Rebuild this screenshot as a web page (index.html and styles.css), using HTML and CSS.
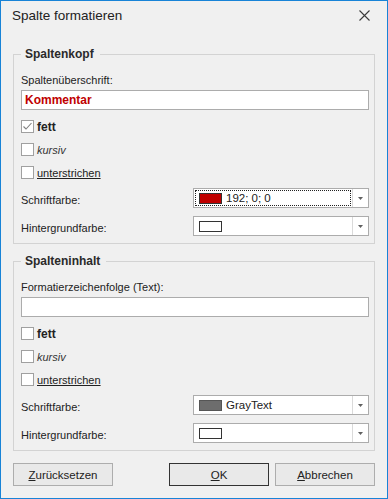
FILE: index.html
```html
<!DOCTYPE html>
<html lang="de">
<head>
<meta charset="utf-8">
<title>Spalte formatieren</title>
<link rel="stylesheet" href="styles.css">
</head>
<body>
<div class="window">
  <div class="titlebar">
    <span class="title">Spalte formatieren</span>
    <svg class="close" width="11" height="11" viewBox="0 0 11 11"><path d="M0.5 0.5 L10.5 10.5 M10.5 0.5 L0.5 10.5" stroke="#3a3a3a" stroke-width="1.1" fill="none"/></svg>
  </div>
  <div class="main">
    <fieldset class="group">
      <legend>Spaltenkopf</legend>
      <div class="field-label">Spaltenüberschrift:</div>
      <div class="textbox"><span class="head-text">Kommentar</span></div>
      <div class="checks">
        <div class="check"><span class="box"><svg width="11" height="11" viewBox="0 0 11 11"><polyline points="1.5,5.5 4,8 9.5,2" stroke="#808080" stroke-width="1.1" fill="none"/></svg></span><span class="bold">fett</span></div>
        <div class="check"><span class="box"></span><span class="italic">kursiv</span></div>
        <div class="check"><span class="box"></span><span class="under">unterstrichen</span></div>
      </div>
      <div class="colors">
        <span class="clabel">Schriftfarbe:</span>
        <div class="combo"><div class="combo-val focus"><span class="swatch red"></span><span class="cval">192; 0; 0</span></div><span class="combo-btn"><svg width="5" height="3" viewBox="0 0 5 3"><path d="M0 0 H5 L2.5 3 Z" fill="#606060"/></svg></span></div>
        <span class="clabel">Hintergrundfarbe:</span>
        <div class="combo"><div class="combo-val"><span class="swatch white"></span></div><span class="combo-btn"><svg width="5" height="3" viewBox="0 0 5 3"><path d="M0 0 H5 L2.5 3 Z" fill="#606060"/></svg></span></div>
      </div>
    </fieldset>
    <fieldset class="group second">
      <legend>Spalteninhalt</legend>
      <div class="field-label">Formatierzeichenfolge (Text):</div>
      <div class="textbox"></div>
      <div class="checks">
        <div class="check"><span class="box"></span><span class="bold">fett</span></div>
        <div class="check"><span class="box"></span><span class="italic">kursiv</span></div>
        <div class="check"><span class="box"></span><span class="under">unterstrichen</span></div>
      </div>
      <div class="colors">
        <span class="clabel">Schriftfarbe:</span>
        <div class="combo"><div class="combo-val"><span class="swatch gray"></span><span class="cval">GrayText</span></div><span class="combo-btn"><svg width="5" height="3" viewBox="0 0 5 3"><path d="M0 0 H5 L2.5 3 Z" fill="#606060"/></svg></span></div>
        <span class="clabel">Hintergrundfarbe:</span>
        <div class="combo"><div class="combo-val"><span class="swatch white"></span></div><span class="combo-btn"><svg width="5" height="3" viewBox="0 0 5 3"><path d="M0 0 H5 L2.5 3 Z" fill="#606060"/></svg></span></div>
      </div>
    </fieldset>
    <div class="buttons">
      <button class="btn"><u>Z</u>urücksetzen</button>
      <span class="spacer"></span>
      <button class="btn default"><u>O</u>K</button>
      <button class="btn"><u>A</u>bbrechen</button>
    </div>
  </div>
</div>
</body>
</html>
```
FILE: styles.css
```css
* { box-sizing: border-box; }
html, body { margin: 0; padding: 0; }
body {
  background: #f0f0f0;
  font-family: "Liberation Sans", Arial, sans-serif;
  font-size: 11px;
  color: #222;
}
.window {
  width: 388px;
  height: 499px;
  border: 1px solid #1883d7;
  background: #f0f0f0;
  display: flex;
  flex-direction: column;
}
.titlebar {
  height: 31px;
  display: flex;
  align-items: center;
  justify-content: space-between;
  padding: 0 17px 2px 11px;
}
.title {
  font-size: 13.5px;
  color: #222;
}
.close { display: block; }
.main {
  padding: 14px 12px 0 12px;
  display: flex;
  flex-direction: column;
}
.group {
  margin: 0;
  padding: 10px 5px 7px 7px;
  border: 1px solid #d3d3d3;
  min-width: 0;
}
.group.second { margin-top: 9px; }
.group legend {
  padding: 0 6px 0 4px;
  line-height: 16px;
  height: 16px;
  font-weight: bold;
  font-size: 12px;
  color: #2a2a2a;
}
.field-label {
  height: 16px;
  line-height: 16px;
}
.textbox {
  margin-top: 2px;
  height: 20px;
  border: 1px solid #acacac;
  background: #fff;
  padding: 0 3px;
  line-height: 18px;
}
.head-text {
  color: #c00000;
  font-weight: bold;
  font-size: 12px;
}
.checks {
  margin-top: 5px;
  display: flex;
  flex-direction: column;
}
.check {
  height: 23px;
  display: flex;
  align-items: center;
  gap: 3px;
}
.box {
  width: 13px;
  height: 13px;
  border: 1px solid #a0a0a0;
  background: #fff;
  display: flex;
}
.bold { font-weight: bold; font-size: 12px; }
.italic { font-style: italic; color: #333; }
.under { text-decoration: underline; }
.colors {
  margin-top: 4px;
  display: grid;
  grid-template-columns: 172px 176px;
  row-gap: 8px;
}
.clabel {
  padding-top: 4px;
  line-height: 16px;
}
.combo {
  height: 20px;
  border: 1px solid #acacac;
  background: #fff;
  display: flex;
}
.combo-val {
  flex: 1;
  margin: 1px;
  border: 1px dotted transparent;
  display: flex;
  align-items: center;
  padding-left: 3px;
  gap: 4px;
}
.combo-val.focus { border-color: #202020; }
.swatch {
  width: 23px;
  height: 11px;
  border: 1px solid #333;
}
.swatch.red { background: #c00000; }
.swatch.gray { background: #6d6d6d; border-color: #555; }
.swatch.white { background: #fff; }
.cval { line-height: 14px; font-size: 11.5px; }
.combo-btn {
  width: 16px;
  border-left: 1px solid #dadada;
  display: flex;
  align-items: center;
  justify-content: center;
}
.buttons {
  margin-top: 12px;
  display: flex;
  gap: 6px;
}
.spacer { flex: 1; }
.btn {
  width: 100px;
  height: 23px;
  margin: 0;
  padding: 0;
  border: 1px solid #adadad;
  background: #e9e9e9;
  font-family: inherit;
  font-size: 11.5px;
  color: #222;
}
.btn.default { border-color: #333; }
.btn u { text-decoration: underline; }
```
